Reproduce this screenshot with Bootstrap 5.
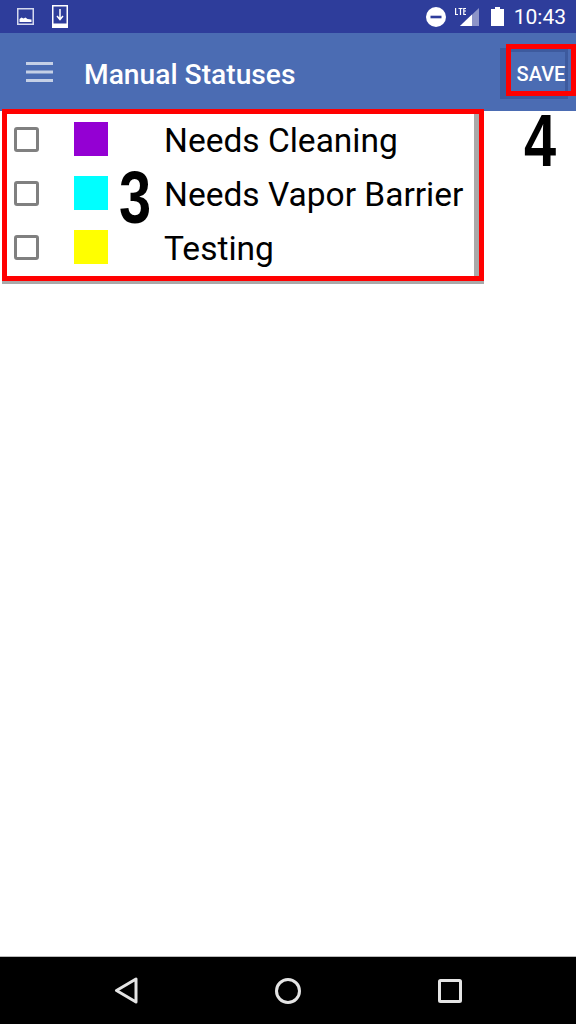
<!DOCTYPE html>
<html lang="en">
<head>
  <meta charset="UTF-8">
  <meta name="viewport" content="width=device-width, initial-scale=1.0">
  <title>Manual Statuses</title>
  <link rel="stylesheet" href="https://cdn.jsdelivr.net/npm/bootstrap@5.3.0/dist/css/bootstrap.min.css">
  <style>
    body {
      font-family: Roboto, "Liberation Sans", sans-serif;
      background: #fff;
    }

    .phone {
      height: 1024px;
      width: 576px;
      overflow: hidden;
    }

    /* top of the phone */
    .status-strip {
      height: 33px;
      background: #2e3d9b;
      color: #fff;
      padding: 0 10px 0 17px;
    }

    .icon-download { margin-left: 18px; }
    .icon-dnd { width: 20px; }
    .icon-signal { margin-left: 9px; }
    .icon-battery { margin-left: 12px; }

    .status-time {
      font-size: 21px;
      line-height: 1;
      margin-left: 10px;
      padding-top: 1px;
    }

    .app-bar {
      height: 78px;
      background: #4b6cb3;
      color: #fff;
      position: relative;
      padding-left: 26px;
    }

    .app-title {
      font-size: 28.2px;
      font-weight: 500;
      margin-left: 31px;
      padding-top: 6px;
      line-height: 1;
    }

    .save-btn {
      position: absolute;
      left: 500px;
      top: 15px;
      width: 68px;
      height: 51px;
      background: #3d5a9e;
    }

    .save-mark {
      position: absolute;
      left: 506px;
      top: 11px;
      width: 70px;
      height: 52px;
      border: 5px solid #f00;
      color: #fff;
      font-size: 20px;
      font-weight: 500;
      line-height: 1;
      padding-top: 8px;
    }

    .save-face {
      position: absolute;
      left: 511px;
      top: 19px;
      width: 54px;
      height: 39px;
      background: #4b6cb3;
    }

    /* status list */
    .status-box {
      position: relative;
      width: 482px;
      height: 172px;
      margin: -2px 0 0 2px;
      border: 5px solid #f00;
      background: #fff;
      padding: 0 0 4px 7px;
      box-shadow: 0 3px 0 #a9a9a9;
    }

    .status-box::after {
      content: "";
      position: absolute;
      top: 0;
      bottom: 0;
      right: 0;
      width: 5px;
      background: #a9a9a9;
    }

    .status-row {
      height: 54px;
      flex: none;
    }

    .tick {
      width: 25px;
      height: 25px;
      border: 3px solid #808080;
      border-radius: 3px;
      flex: none;
    }

    .swatch {
      width: 34px;
      height: 34px;
      margin-left: 35px;
      flex: none;
    }

    .status-name {
      font-size: 33.5px;
      line-height: 1;
      margin: 4px 0 0 56px;
      color: #000;
      white-space: nowrap;
    }

    .callout {
      position: absolute;
      font-family: "Liberation Sans", sans-serif;
      font-weight: 700;
      font-size: 74px;
      line-height: 1;
      color: #000;
      transform-origin: left center;
      transform: scaleX(.78);
    }

    .callout-three { left: 119px; top: 161px; }
    .callout-four { left: 524px; top: 104px; }

    /* bottom of the phone */
    .nav-strip {
      height: 68px;
      background: #000;
      border-top: 1px solid #bbb;
      margin-top: auto;
    }

    .nav-cell {
      width: 162px;
    }
  </style>
</head>
<body>
  <div class="phone d-flex flex-column position-relative">
    <div class="status-strip d-flex align-items-center">
      <svg width="17" height="17" viewBox="0 0 17 17">
        <rect x=".75" y=".75" width="15.500" height="15.500" fill="none" stroke="#d5d9ee" stroke-width="1.500"/>
        <path d="M2.500 14v-3l2-1.500 2 1 2-1 2 1.500 4 .5v2.500z" fill="#fff"/>
      </svg>
      <svg class="icon-download" width="16" height="23" viewBox="0 0 16 23">
        <path d="M0 0h16v23H0z M1.500 1.500v17h13v-17z" fill="#fff" fill-rule="evenodd"/>
        <path d="M8 4v10M5 11l3 3.500 3-3.500" fill="none" stroke="#fff" stroke-width="1.500"/>
      </svg>
      <div class="ms-auto d-flex align-items-center">
        <svg class="icon-dnd" width="20" height="20" viewBox="0 0 20 20">
          <circle cx="10" cy="10" r="10" fill="#fff"/>
          <rect x="4.500" y="8.700" width="11" height="2.600" fill="#2e3d9b"/>
        </svg>
        <svg class="icon-signal" width="24" height="18" viewBox="0 0 24 18">
          <path d="M24 0v18H5z" fill="#fff" fill-opacity=".45"/>
          <path d="M17 6.500V18H5z" fill="#fff"/>
          <path d="M0 0h1.200v6H3v1H0zM3.500 0h4v1H6.100v6H4.900V1H3.500zM8.200 0H11v1H9.400v1.500H11v1H9.400V6H11v1H8.200z" fill="#fff"/>
        </svg>
        <svg class="icon-battery" width="13" height="19" viewBox="0 0 13 19">
          <path d="M4 0h5v2h4v17H0V2h4z" fill="#fff"/>
        </svg>
        <span class="status-time">10:43</span>
      </div>
    </div>

    <div class="app-bar d-flex align-items-center">
      <svg width="27" height="20" viewBox="0 0 27 20">
        <path d="M0 1.500h27M0 10h27M0 18.500h27" stroke="#c5d0e6" stroke-width="3"/>
      </svg>
      <span class="app-title">Manual Statuses</span>
      <div class="save-btn"></div>
      <div class="save-face"></div>
      <div class="save-mark d-flex align-items-center justify-content-center">SAVE</div>
    </div>

    <div class="status-box d-flex flex-column justify-content-center">
      <div class="status-row d-flex align-items-center">
        <span class="tick"></span>
        <span class="swatch" style="background:#9400d3"></span>
        <span class="status-name">Needs Cleaning</span>
      </div>
      <div class="status-row d-flex align-items-center">
        <span class="tick"></span>
        <span class="swatch" style="background:#0ff"></span>
        <span class="status-name">Needs Vapor Barrier</span>
      </div>
      <div class="status-row d-flex align-items-center">
        <span class="tick"></span>
        <span class="swatch" style="background:#ff0"></span>
        <span class="status-name">Testing</span>
      </div>
    </div>
    <div class="callout callout-three">3</div>
    <div class="callout callout-four">4</div>

    <div class="nav-strip d-flex align-items-center justify-content-center">
      <div class="nav-cell d-flex justify-content-center">
        <svg width="24" height="27" viewBox="0 0 24 27">
          <path d="M22 2v23L2.500 13.500z" fill="none" stroke="#e4e4e4" stroke-width="3" stroke-linejoin="round"/>
        </svg>
      </div>
      <div class="nav-cell d-flex justify-content-center">
        <svg width="26" height="26" viewBox="0 0 26 26">
          <circle cx="13" cy="13" r="11.500" fill="none" stroke="#e4e4e4" stroke-width="3"/>
        </svg>
      </div>
      <div class="nav-cell d-flex justify-content-center">
        <svg width="24" height="24" viewBox="0 0 24 24">
          <rect x="1.500" y="1.500" width="21" height="21" rx="1" fill="none" stroke="#e4e4e4" stroke-width="3"/>
        </svg>
      </div>
    </div>
  </div>
  <script src="https://cdn.jsdelivr.net/npm/bootstrap@5.3.0/dist/js/bootstrap.bundle.min.js"></script>
</body>
</html>
